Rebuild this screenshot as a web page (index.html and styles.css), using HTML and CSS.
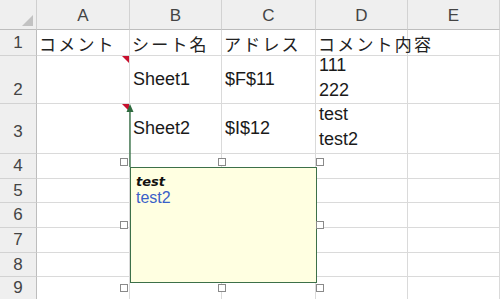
FILE: index.html
```html
<!DOCTYPE html>
<html lang="ja">
<head>
<meta charset="utf-8">
<link rel="stylesheet" href="styles.css">
</head>
<body>
<div class="sheet">
  <div class="grid">
    <div class="corner"><span class="corner-tri"></span></div>
    <div class="colh">A</div>
    <div class="colh">B</div>
    <div class="colh">C</div>
    <div class="colh">D</div>
    <div class="colh">E</div>

    <div class="rowh">1</div>
    <div class="cell jp">コメント</div>
    <div class="cell jp">シート名</div>
    <div class="cell jp">アドレス</div>
    <div class="cell jp">コメント内容</div>
    <div class="cell"></div>

    <div class="rowh rowh-2">2</div>
    <div class="cell has-note"><span class="note-mark"></span></div>
    <div class="cell">Sheet1</div>
    <div class="cell">$F$11</div>
    <div class="cell multi">111<br>222</div>
    <div class="cell"></div>

    <div class="rowh rowh-3">3</div>
    <div class="cell has-note"><span class="note-mark"></span></div>
    <div class="cell">Sheet2</div>
    <div class="cell">$I$12</div>
    <div class="cell multi">test<br>test2</div>
    <div class="cell"></div>

    <div class="rowh">4</div>
    <div class="cell"></div><div class="cell"></div><div class="cell"></div><div class="cell"></div><div class="cell"></div>
    <div class="rowh">5</div>
    <div class="cell"></div><div class="cell"></div><div class="cell"></div><div class="cell"></div><div class="cell"></div>
    <div class="rowh">6</div>
    <div class="cell"></div><div class="cell"></div><div class="cell"></div><div class="cell"></div><div class="cell"></div>
    <div class="rowh">7</div>
    <div class="cell"></div><div class="cell"></div><div class="cell"></div><div class="cell"></div><div class="cell"></div>
    <div class="rowh">8</div>
    <div class="cell"></div><div class="cell"></div><div class="cell"></div><div class="cell"></div><div class="cell"></div>
    <div class="rowh">9</div>
    <div class="cell"></div><div class="cell"></div><div class="cell"></div><div class="cell"></div><div class="cell"></div>
  </div>

  <svg class="arrow" width="12" height="66" viewBox="0 0 12 66">
    <line x1="6" y1="6" x2="6" y2="64" stroke="#2f6b3f" stroke-width="1.3"/>
    <polygon points="6,1 2.5,9 9.5,9" fill="#2f6b3f"/>
  </svg>

  <div class="comment">
    <div class="c-author">test</div>
    <div class="c-text">test2</div>
  </div>

  <span class="handle h-tl"></span>
  <span class="handle h-tm"></span>
  <span class="handle h-tr"></span>
  <span class="handle h-ml"></span>
  <span class="handle h-mr"></span>
  <span class="handle h-bl"></span>
  <span class="handle h-bm"></span>
  <span class="handle h-br"></span>
</div>
</body>
</html>
```

FILE: styles.css
```css
* { box-sizing: border-box; }
html, body {
  margin: 0;
  padding: 0;
  background: #ffffff;
  overflow: hidden;
}
.sheet {
  position: relative;
  width: 500px;
  height: 299px;
  overflow: hidden;
}
.grid {
  display: grid;
  grid-template-columns: 37px 93px 92px 94px 92px 92px;
  grid-template-rows: 30px 26px 48px 50px 25px 24px 25px 25px 24px 23px;
  font-family: "Liberation Sans", Arial, sans-serif;
  font-size: 18px;
  color: #1a1a1a;
}
.corner {
  position: relative;
  background: #efefef;
  border-right: 1px solid #cfcfcf;
  border-bottom: 1px solid #bdbdbd;
}
.corner-tri {
  position: absolute;
  right: 3px;
  bottom: 3px;
  width: 0;
  height: 0;
  border-left: 11px solid transparent;
  border-bottom: 11px solid #c2c2c2;
}
.colh {
  background: #efefef;
  border-right: 1px solid #d2d2d2;
  border-bottom: 1px solid #bdbdbd;
  display: flex;
  align-items: center;
  justify-content: center;
  font-size: 17px;
  color: #444;
  padding-top: 2px;
}
.rowh {
  background: #efefef;
  border-right: 1px solid #bdbdbd;
  border-bottom: 1px solid #d2d2d2;
  display: flex;
  align-items: center;
  justify-content: center;
  font-size: 17px;
  color: #444;
}
.rowh-2 { align-items: flex-end; padding-bottom: 3px; }
.rowh-3 { align-items: flex-end; padding-bottom: 11px; }
.cell {
  position: relative;
  border-right: 1px solid #dadada;
  border-bottom: 1px solid #dadada;
  display: flex;
  align-items: center;
  padding-left: 3px;
  white-space: nowrap;
  overflow: visible;
}
.jp {
  font-family: "Noto Sans CJK JP", "Noto Sans CJK SC", sans-serif;
  font-size: 17px;
  letter-spacing: 2.2px;
  padding-left: 2px;
  padding-top: 1px;
  color: #222;
}
.multi {
  line-height: 25px;
  padding-bottom: 3px;
}
.note-mark {
  position: absolute;
  top: 0;
  right: 0;
  width: 0;
  height: 0;
  border-left: 7px solid transparent;
  border-top: 7px solid #c8102e;
}
.arrow {
  position: absolute;
  left: 124px;
  top: 103px;
}
.comment {
  position: absolute;
  left: 130px;
  top: 167px;
  width: 187px;
  height: 116px;
  background: #ffffe1;
  border: 1px solid #3d7049;
  padding: 7px 4px 0 5px;
}
.c-author {
  font-family: "DejaVu Sans", "Liberation Sans", sans-serif;
  font-weight: bold;
  font-style: italic;
  font-size: 13px;
  line-height: 14px;
  color: #111;
}
.c-text {
  font-family: "Liberation Sans", Arial, sans-serif;
  font-size: 16px;
  line-height: 17px;
  color: #3a5fc8;
}
.handle {
  position: absolute;
  width: 8px;
  height: 8px;
  background: #ffffff;
  border: 1px solid #8a8a8a;
}
.h-tl { left: 120px; top: 158px; }
.h-tm { left: 218px; top: 158px; }
.h-tr { left: 316px; top: 158px; }
.h-ml { left: 120px; top: 221px; }
.h-mr { left: 316px; top: 221px; }
.h-bl { left: 120px; top: 284px; }
.h-bm { left: 218px; top: 284px; }
.h-br { left: 316px; top: 284px; }
```
